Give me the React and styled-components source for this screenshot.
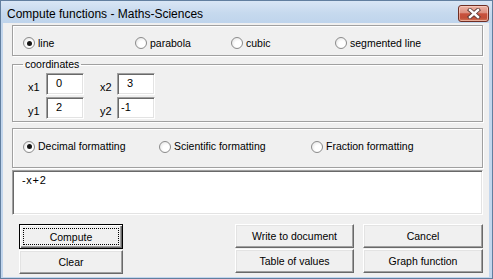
import React from "react";
import styled, { createGlobalStyle, css } from "styled-components";

const Global = createGlobalStyle`
  html, body { margin: 0; padding: 0; background: #ffffff; }
  body { font-family: "Liberation Sans", Arial, sans-serif; }
  #root { width: 493px; height: 279px; }
`;

const Window = styled.div`
  width: 493px;
  height: 279px;
  box-sizing: border-box;
  border: 1px solid #627f9f;
  background: #c2d6ed;
  display: flex;
  flex-direction: column;
  overflow: hidden;
`;

const TitleBar = styled.div`
  height: 22px;
  flex: none;
  display: flex;
  align-items: flex-start;
  padding-left: 6px;
  background: linear-gradient(#d9e6f5 0%, #c6d9ee 55%, #bfd4ec 100%);
`;

const Title = styled.div`
  margin-top: 6px;
  font-size: 12px;
  line-height: 14px;
  color: #000;
  white-space: nowrap;
`;

const CloseButton = styled.div`
  margin-left: auto;
  margin-right: 3px;
  margin-top: 4px;
  width: 31px;
  height: 17px;
  box-sizing: border-box;
  border: 1px solid #6e2e24;
  border-radius: 3px;
  background: linear-gradient(#ecb3a6 0%, #dc8f7f 45%, #c7513d 52%, #c24e37 80%, #d27a5c 100%);
  box-shadow: inset 0 0 0 1px rgba(255, 220, 210, 0.55);
  display: flex;
  align-items: center;
  justify-content: center;
`;

const Client = styled.div`
  flex: 1;
  margin: 0 3px 1px 2px;
  background: #f0f0f0;
  padding: 2px 6px 0 9px;
  display: flex;
  flex-direction: column;
  font-size: 10.5px;
  color: #000;
`;

const etched = css`
  border: 1px solid #a0a0a0;
  box-shadow: inset 1px 1px 0 #ffffff, 1px 1px 0 #ffffff;
`;

const Group = styled.div`
  ${etched}
  box-sizing: border-box;
  height: ${(p) => p.$h}px;
  margin-top: ${(p) => p.$mt || 0}px;
  display: flex;
  align-items: center;
  padding: ${(p) => p.$pad};
`;

const Fieldset = styled.fieldset`
  ${etched}
  margin: 2px 0 0 0;
  padding: 0;
  min-width: 0;
`;

const Legend = styled.legend`
  margin-left: 10px;
  padding: 0 2px;
  font-size: 10.5px;
  line-height: 13px;
`;

const CoordGrid = styled.div`
  display: flex;
  flex-direction: column;
  gap: 2px;
  padding: 2px 0 2px 15px;
`;

const CoordRow = styled.div`
  display: flex;
  align-items: flex-end;
`;

const CoordLabel = styled.span`
  width: ${(p) => p.$w}px;
  margin-left: ${(p) => p.$ml || 0}px;
  font-size: 11px;
  line-height: 13px;
  padding-bottom: 1px;
`;

const Field = styled.div`
  width: 38px;
  height: 22px;
  box-sizing: border-box;
  background: #ffffff;
  border: 1px solid;
  border-color: #a0a0a0 #ffffff #ffffff #a0a0a0;
  box-shadow: inset 1px 1px 0 #696969, inset -1px -1px 0 #e3e3e3;
  padding: 3px 0 0 ${(p) => p.$pl}px;
  font-size: 11px;
  line-height: 13px;
`;

const Radio = styled.label`
  display: flex;
  align-items: center;
  gap: 3px;
  width: ${(p) => (p.$w ? `${p.$w}px` : "auto")};
  flex: none;
  line-height: 13px;
  white-space: nowrap;
`;

const Dot = styled.span`
  width: 12px;
  height: 12px;
  box-sizing: border-box;
  border-radius: 50%;
  border: 1px solid #8b8b8b;
  background: radial-gradient(circle at 62% 62%, #ffffff 35%, #dedede 100%);
  position: relative;
  flex: none;
  ${(p) =>
    p.$on &&
    css`
      &::after {
        content: "";
        position: absolute;
        left: 2.5px;
        top: 2.5px;
        width: 5px;
        height: 5px;
        border-radius: 50%;
        background: #151515;
      }
    `}
`;

const Result = styled.div`
  margin-top: 2px;
  height: 45px;
  box-sizing: border-box;
  background: #ffffff;
  border: 1px solid;
  border-color: #a0a0a0 #ffffff #ffffff #a0a0a0;
  box-shadow: inset 1px 1px 0 #696969, inset -1px -1px 0 #e3e3e3;
  padding: 3px 0 0 9px;
  font-size: 11px;
  line-height: 13px;
  letter-spacing: 0.7px;
`;

const ButtonArea = styled.div`
  margin-top: 9px;
  display: flex;
  padding-left: 7px;
`;

const ButtonCol = styled.div`
  width: ${(p) => p.$w}px;
  margin-left: ${(p) => p.$ml};
  display: flex;
  flex-direction: column;
  gap: 1px;
`;

const Button = styled.div`
  position: relative;
  height: 24px;
  box-sizing: border-box;
  background: #f0f0f0;
  border: 1px solid;
  border-color: #ffffff #696969 #696969 #ffffff;
  box-shadow: inset -1px -1px 0 #a0a0a0, inset 1px 1px 0 #e3e3e3;
  display: flex;
  align-items: center;
  justify-content: center;
  font-size: 10.5px;
  line-height: 13px;
  padding-top: 1px;
  ${(p) =>
    p.$default &&
    css`
      height: 25px;
      border: 1px solid #000;
      box-shadow: inset 1px 1px 0 #ffffff, inset -1px -1px 0 #696969, inset -2px -2px 0 #a0a0a0;
      &::after {
        content: "";
        position: absolute;
        left: 3px;
        right: 3px;
        top: 3px;
        bottom: 3px;
        border: 1px dotted #000;
      }
    `}
`;

const RadioRow = ({ items, checked }) =>
  items.map(([label, w]) => (
    <Radio key={label} $w={w}>
      <Dot $on={label === checked} />
      {label}
    </Radio>
  ));

export default function App() {
  return (
    <>
      <Global />
      <Window>
        <TitleBar>
          <Title>Compute functions - Maths-Sciences</Title>
          <CloseButton>
            <svg width="14" height="11" viewBox="0 0 14 11">
              <path d="M3 2 L11 9 M11 2 L3 9" stroke="#5a3a36" strokeWidth="4.2" strokeLinecap="square" />
              <path d="M3 2 L11 9 M11 2 L3 9" stroke="#ffffff" strokeWidth="2.4" strokeLinecap="square" />
            </svg>
          </CloseButton>
        </TitleBar>
        <Client>
          <Group $h={31} $pad="5px 0 0 10px">
            <RadioRow
              checked="line"
              items={[
                ["line", 112],
                ["parabola", 96],
                ["cubic", 104],
                ["segmented line", 0],
              ]}
            />
          </Group>
          <Fieldset>
            <Legend>coordinates</Legend>
            <CoordGrid>
              <CoordRow>
                <CoordLabel $w={18}>x1</CoordLabel>
                <Field $pl={9}>0</Field>
                <CoordLabel $w={17} $ml={16}>x2</CoordLabel>
                <Field $pl={9}>3</Field>
              </CoordRow>
              <CoordRow>
                <CoordLabel $w={18}>y1</CoordLabel>
                <Field $pl={9}>2</Field>
                <CoordLabel $w={17} $ml={16}>y2</CoordLabel>
                <Field $pl={3}>-1</Field>
              </CoordRow>
            </CoordGrid>
          </Fieldset>
          <Group $h={40} $mt={6} $pad="0 0 3px 10px">
            <RadioRow
              checked="Decimal formatting"
              items={[
                ["Decimal formatting", 136],
                ["Scientific formatting", 152],
                ["Fraction formatting", 0],
              ]}
            />
          </Group>
          <Result>-x+2</Result>
          <ButtonArea>
            <ButtonCol $w={104} $ml="0">
              <Button $default>Compute</Button>
              <Button>Clear</Button>
            </ButtonCol>
            <ButtonCol $w={119} $ml="auto">
              <Button>Write to document</Button>
              <Button>Table of values</Button>
            </ButtonCol>
            <ButtonCol $w={120} $ml="9px">
              <Button>Cancel</Button>
              <Button>Graph function</Button>
            </ButtonCol>
          </ButtonArea>
        </Client>
      </Window>
    </>
  );
}
